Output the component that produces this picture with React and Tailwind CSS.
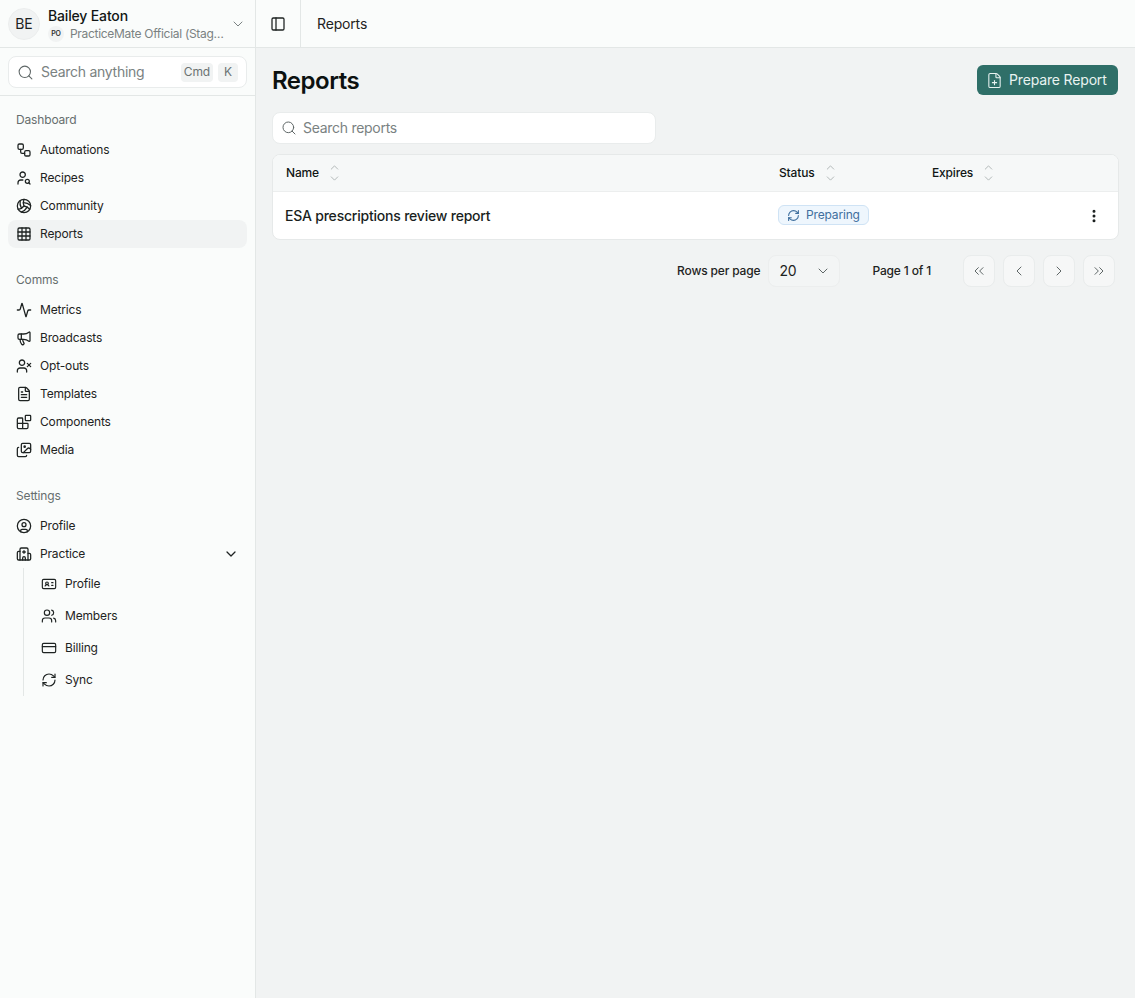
import {
  Workflow, UserSearch, Volleyball, Grid3x3, Activity, Megaphone, UserX, FileText, Blocks, Images,
  CircleUser, Hospital, IdCard, Users, CreditCard, RefreshCw, PanelLeft, ChevronDown, ChevronUp,
  Search, FilePlus, EllipsisVertical, ChevronsLeft, ChevronsRight, ChevronLeft, ChevronRight,
} from 'lucide-react';

const groups = [
  { title: 'Dashboard', items: [
    { label: 'Automations', icon: Workflow },
    { label: 'Recipes', icon: UserSearch },
    { label: 'Community', icon: Volleyball },
    { label: 'Reports', icon: Grid3x3, active: true },
  ] },
  { title: 'Comms', items: [
    { label: 'Metrics', icon: Activity },
    { label: 'Broadcasts', icon: Megaphone },
    { label: 'Opt-outs', icon: UserX },
    { label: 'Templates', icon: FileText },
    { label: 'Components', icon: Blocks },
    { label: 'Media', icon: Images },
  ] },
];

const subItems = [
  { label: 'Profile', icon: IdCard },
  { label: 'Members', icon: Users },
  { label: 'Billing', icon: CreditCard },
  { label: 'Sync', icon: RefreshCw },
];

function NavItem({ item }) {
  const Icon = item.icon;
  return (
    <div className={`flex items-center gap-2 h-7 px-2 rounded-lg text-xs text-[#1e2322] ${item.active ? 'bg-[#f1f3f3]' : ''}`}>
      <Icon size={16} strokeWidth={1.9} className="shrink-0" />
      <span>{item.label}</span>
    </div>
  );
}

function SortHeader({ label, className }) {
  return (
    <div className={`flex items-center gap-[9px] text-xs font-medium text-[#111615] ${className}`}>
      <span>{label}</span>
      <div className="flex flex-col text-[#a3aaaa]">
        <ChevronUp size={13} strokeWidth={1.5} className="-mb-0.5" />
        <ChevronDown size={13} strokeWidth={1.5} />
      </div>
    </div>
  );
}

function PageButton({ icon: Icon }) {
  return (
    <div className="w-8 h-8 flex items-center justify-center rounded-lg bg-[#f6f7f7] border border-[#e9ecec] text-[#5f6767]">
      <Icon size={16} strokeWidth={1.5} />
    </div>
  );
}

function Sidebar() {
  return (
    <aside className="w-[256px] shrink-0 min-h-[998px] bg-[#fafcfb] border-r border-[#e3e7e6]">
      <div className="h-12 flex items-center gap-2 pl-2 pr-[9px] border-b border-[#e3e7e6]">
        <div className="w-8 h-8 shrink-0 rounded-full bg-[#f1f3f3] border border-[#eceeee] flex items-center justify-center text-sm text-[#1e2322]">BE</div>
        <div className="flex-1 min-w-0 pt-[3px]">
          <div className="text-sm leading-4 font-medium text-[#111615]">Bailey Eaton</div>
          <div className="flex items-center gap-1.5 mt-0.5">
            <div className="w-4 h-4 shrink-0 rounded-full bg-[#f1f3f3] flex items-center justify-center text-[7px] font-semibold text-[#333]">PO</div>
            <span className="text-xs leading-4 tracking-[-0.025em] text-[#7a8282] whitespace-nowrap">PracticeMate Official (Stag…</span>
          </div>
        </div>
        <ChevronDown size={16} strokeWidth={1.5} className="shrink-0 text-[#7a8282]" />
      </div>
      <div className="h-12 px-2 pt-2 border-b border-[#e3e7e6]">
        <div className="h-8 flex items-center gap-[7px] px-2 rounded-lg bg-white border border-[#e9ecec]">
          <Search size={17} strokeWidth={1.5} className="text-[#5f6767]" />
          <span className="flex-1 text-sm tracking-[-0.02em] text-[#7a8282]">Search anything</span>
          <span className="h-[19px] px-[3px] flex items-center rounded bg-[#f1f3f3] text-xs text-[#6a7272]">Cmd</span>
          <span className="-ml-0.5 h-[19px] w-5 flex items-center justify-center rounded bg-[#f1f3f3] text-xs text-[#6a7272]">K</span>
        </div>
      </div>
      <div className="px-2 pt-2.5">
        {groups.map((g) => (
          <div key={g.title} className="mb-[18px]">
            <div className="h-7 px-2 flex items-center text-xs text-[#666e6e] mb-0.5">{g.title}</div>
            {g.items.map((item) => <NavItem key={item.label} item={item} />)}
          </div>
        ))}
        <div className="h-7 px-2 flex items-center text-xs text-[#666e6e] mb-0.5">Settings</div>
        <NavItem item={{ label: 'Profile', icon: CircleUser }} />
        <div className="flex items-center gap-2 h-7 px-2 text-xs text-[#1e2322]">
          <Hospital size={16} strokeWidth={1.9} />
          <span className="flex-1">Practice</span>
          <ChevronDown size={16} strokeWidth={1.9} />
        </div>
        <div className="ml-[15px] pl-[17px] border-l border-[#e3e7e6]">
          {subItems.map((s) => {
            const Icon = s.icon;
            return (
              <div key={s.label} className="h-8 flex items-center gap-2 text-xs text-[#1e2322]">
                <Icon size={16} strokeWidth={1.75} className="shrink-0" />
                <span>{s.label}</span>
              </div>
            );
          })}
        </div>
      </div>
    </aside>
  );
}

export default function App() {
  return (
    <div className="flex min-h-[998px] bg-[#f1f3f3] font-['Inter',sans-serif] tracking-[-0.01em]">
      <Sidebar />
      <main className="flex-1 min-w-0">
        <div className="h-12 flex items-center bg-[#fafcfb] border-b border-[#e3e7e6]">
          <div className="w-[45px] h-full flex items-center justify-center border-r border-[#e3e7e6]">
            <PanelLeft size={16} strokeWidth={1.9} className="text-[#1e2322]" />
          </div>
          <span className="pl-4 text-sm text-[#1e2322]">Reports</span>
        </div>
        <div className="pl-4 pr-4">
          <div className="flex items-start justify-between pt-[17px]">
            <h1 className="text-2xl font-semibold tracking-[-0.02em] text-[#0c1110]">Reports</h1>
            <button className="mr-px h-[30px] w-[141px] flex items-center gap-1.5 pl-[9px] rounded-md bg-[#2f6f68] text-sm text-[#e9f3f1]">
              <FilePlus size={17} strokeWidth={1.5} />
              <span>Prepare Report</span>
            </button>
          </div>
          <div className="mt-[15px] w-[384px] h-8 flex items-center gap-1.5 px-2 rounded-lg bg-white border border-[#e9ecec]">
            <Search size={16} strokeWidth={1.5} className="text-[#5f6767]" />
            <span className="text-sm tracking-[-0.02em] text-[#7a8282]">Search reports</span>
          </div>
          <div className="mt-2.5 rounded-lg border border-[#e6e9e9] bg-white overflow-hidden">
            <div className="h-[37px] flex items-center bg-[#f6f8f8] border-b border-[#eceeee]">
              <SortHeader label="Name" className="w-[506px] pl-[13px]" />
              <SortHeader label="Status" className="w-[153px]" />
              <SortHeader label="Expires" />
            </div>
            <div className="h-[47px] flex items-center">
              <span className="w-[505px] pl-3 text-sm font-medium tracking-[-0.015em] text-[#1a1f1e]">ESA prescriptions review report</span>
              <div className="flex-1">
                <span className="inline-flex items-center gap-1.5 h-5 px-2 rounded-md bg-[#eef6fd] border border-[#cfe3f5] text-xs text-[#3f6f9e]">
                  <RefreshCw size={13} strokeWidth={2} />
                  Preparing
                </span>
              </div>
              <EllipsisVertical size={16} strokeWidth={2.5} className="mr-4 text-[#1a1f1e]" />
            </div>
          </div>
          <div className="mt-[15px] flex items-center justify-end pr-1">
            <span className="text-xs font-medium text-[#1e2322]">Rows per page</span>
            <div className="ml-2 w-[72px] h-8 flex items-center justify-between pl-2.5 pr-2 rounded-lg bg-[#f3f5f5] border border-[#eceeee] text-sm text-[#1e2322]">
              <span>20</span>
              <ChevronDown size={16} strokeWidth={1.5} className="text-[#5f6767]" />
            </div>
            <span className="ml-8 text-xs font-medium text-[#1e2322]">Page 1 of 1</span>
            <div className="ml-8 flex gap-2">
              <PageButton icon={ChevronsLeft} />
              <PageButton icon={ChevronLeft} />
              <PageButton icon={ChevronRight} />
              <PageButton icon={ChevronsRight} />
            </div>
          </div>
        </div>
      </main>
    </div>
  );
}
